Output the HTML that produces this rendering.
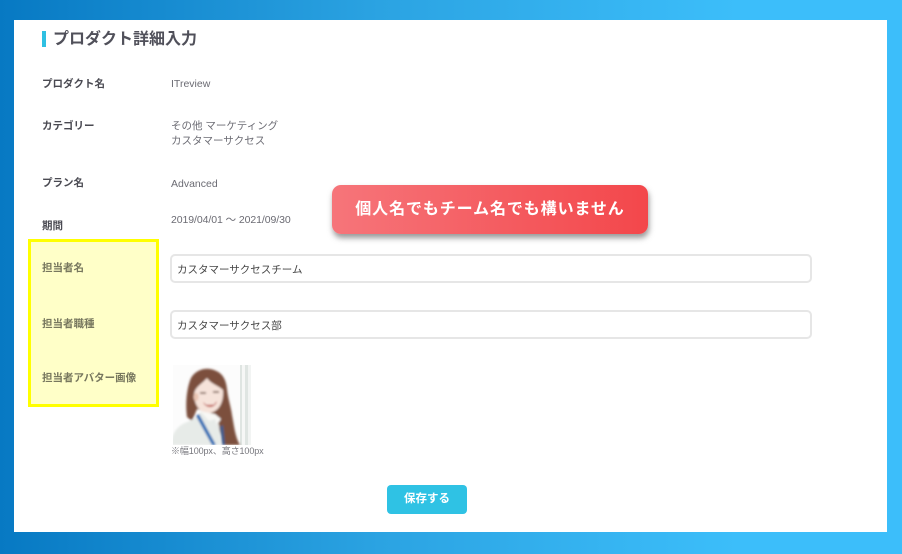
<!DOCTYPE html>
<html lang="ja">
<head>
<meta charset="utf-8">
<style>
html,body{margin:0;padding:0;}
body{width:902px;height:554px;overflow:hidden;position:relative;background:linear-gradient(90deg,#0779c3 0%,#2ba3e2 42%,#3cbefa 82%,#3cbefa 100%);font-family:"Liberation Sans","Noto Sans CJK JP",sans-serif;}
#panel{position:absolute;left:14px;top:20px;width:873px;height:512px;background:#fff;}
.a{position:absolute;white-space:nowrap;}
.l{font-size:10.5px;font-weight:700;color:#4a4a52;line-height:14px;filter:blur(.3px);}
.y{color:#77775e;}
.v{font-size:10.5px;color:#6b6b73;line-height:15px;filter:blur(.3px);}
.inp{position:absolute;left:170px;width:633px;height:25px;border:2px solid #e6e6e6;border-radius:5px;background:#fff;font-size:10.5px;color:#444;line-height:28px;padding-left:5px;}
</style>
</head>
<body>
<div id="panel"></div>
<div class="a" style="left:42px;top:31px;width:4px;height:16px;background:#2fc0e2;"></div>
<div class="a" style="left:53px;top:30px;font-size:16px;font-weight:700;color:#50505a;line-height:20px;">プロダクト詳細入力</div>

<div class="a l" style="left:42px;top:77px;">プロダクト名</div>
<div class="a v" style="left:171px;top:77px;">ITreview</div>
<div class="a l" style="left:42px;top:119px;">カテゴリー</div>
<div class="a v" style="left:171px;top:119px;">その他 マーケティング<br>カスタマーサクセス</div>
<div class="a l" style="left:42px;top:176px;">プラン名</div>
<div class="a v" style="left:171px;top:177px;">Advanced</div>
<div class="a l" style="left:42px;top:219px;">期間</div>
<div class="a v" style="left:171px;top:213px;letter-spacing:-.08px;">2019/04/01 ～ 2021/09/30</div>

<div class="inp" style="top:254px;">カスタマーサクセスチーム</div>
<div class="inp" style="top:310px;">カスタマーサクセス部</div>

<svg class="a" style="left:171px;top:365px;" width="82" height="80" viewBox="0 0 82 80">
<defs><filter id="b" x="-10%" y="-10%" width="120%" height="120%"><feGaussianBlur stdDeviation="1"/></filter><clipPath id="c"><rect x="2" y="0" width="78" height="80"/></clipPath></defs>
<g clip-path="url(#c)">
<rect width="80" height="80" fill="#fcfcfc"/>
<rect x="69" y="0" width="11" height="80" fill="#dfe5e2"/>
<rect x="71" y="0" width="3" height="80" fill="#f6f7f6"/>
<rect x="77" y="0" width="3" height="80" fill="#f2f4f3"/>
<g filter="url(#b)">
<path d="M16 52 C14 38 16 22 20 13 C25 4 36 2 43 5 C52 8 55 15 56 24 C57 34 60 42 61 50 C63 60 64 72 69 80 L52 80 C50 68 46 56 40 48 L26 44 L21 56 Z" fill="#7c4f3d"/>
<path d="M23 31 C23 22 30 20 36 13 C40 19 48 21 52 25 C53 37 48 47 38 48 C29 48 24 41 23 31 Z" fill="#f6e3da"/>
<ellipse cx="25" cy="32" rx="2.5" ry="4" fill="#e9c4b2"/>
<path d="M32 37 C36 41 42 41 46 36 C44 44 35 44 32 37 Z" fill="#c2635c"/>
<path d="M34 38 C37 40 41 40 44 38 L43 39.5 L35 39.5 Z" fill="#fff"/>
<path d="M29 28 h6 M42 27 h6" stroke="#6b4a3d" stroke-width="1.5"/>
<path d="M0 80 C1 68 6 60 19 56 L28 50 L30 46 L44 54 L48 60 L50 80 Z" fill="#e7ebe8"/>
<path d="M25 51 L41 80 L45 80 L28 49 Z" fill="#2d6fb6"/>
<path d="M49 62 L51 80 L54 80 L52 60 Z" fill="#3c5f92"/>
<path d="M29 46 L38 56 L44 54 L46 60 L50 54 L44 49 Z" fill="#f8f8f5"/>
</g>
</g>
</svg>
<div class="a" style="left:171px;top:445px;font-size:9px;letter-spacing:-.1px;color:#77777d;line-height:12px;">※幅100px、高さ100px</div>

<div class="a" style="left:387px;top:485px;width:80px;height:29px;background:#2fc2e4;border-radius:4px;color:#fff;font-size:11.5px;font-weight:700;text-align:center;line-height:29px;">保存する</div>

<div class="a" style="left:332px;top:185px;width:316px;height:49px;border-radius:9px;background:linear-gradient(90deg,#f6757a 0%,#f3474b 100%);box-shadow:1px 4px 6px rgba(70,70,70,.55);color:#fff;font-size:16px;font-weight:700;text-align:center;line-height:50px;letter-spacing:.9px;">個人名でもチーム名でも構いません</div>

<div class="a" style="left:28px;top:239px;width:131px;height:168px;box-sizing:border-box;border:3px solid #ffff00;background:#ffffc8;"></div>
<div class="a l y" style="left:42px;top:261px;">担当者名</div>
<div class="a l y" style="left:42px;top:317px;">担当者職種</div>
<div class="a l y" style="left:42px;top:371px;">担当者アバター画像</div>
</body>
</html>
